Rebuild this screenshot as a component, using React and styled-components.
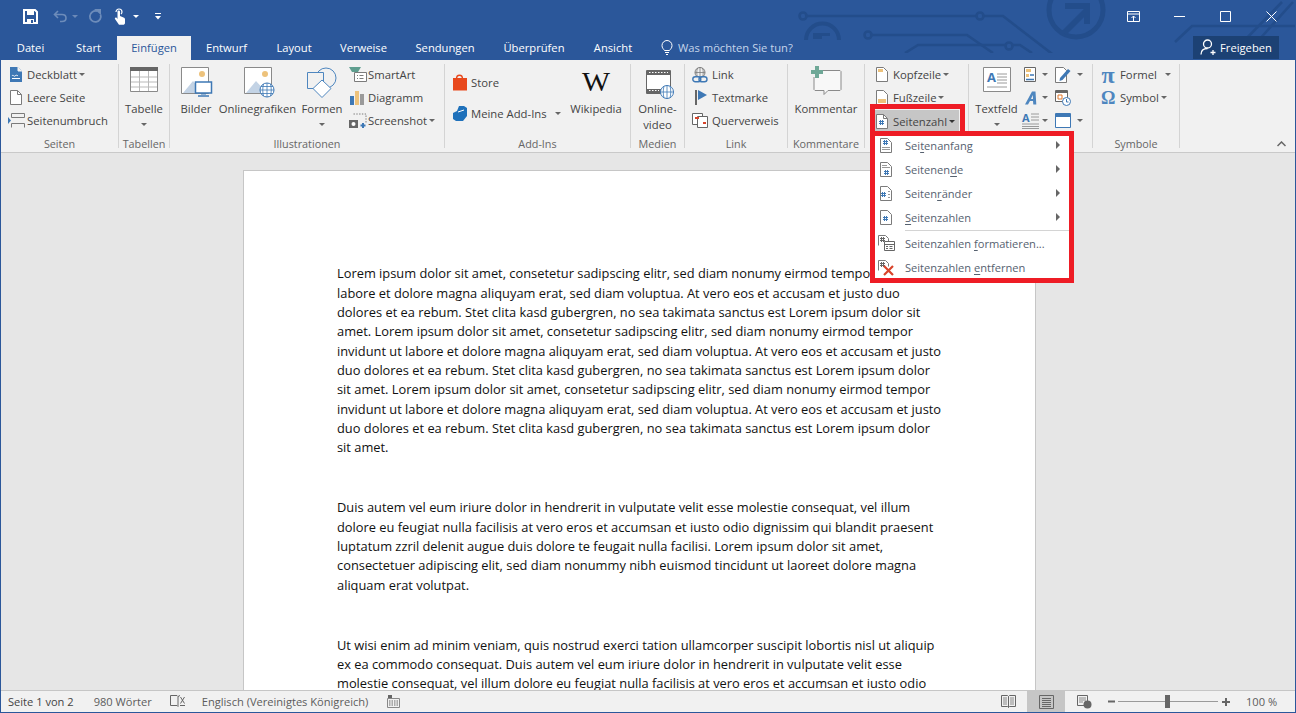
import React from 'react';
import styled, { createGlobalStyle } from 'styled-components';

const GlobalStyle = createGlobalStyle`
  html, body { margin: 0; padding: 0; overflow: hidden; background: #2b579a; }
  * { box-sizing: border-box; }
`;

const FONT = `"Open Sans", "Noto Sans", sans-serif`;
const BLUE = '#2b579a';
const RED = '#ee1c25';

const s = {
  Window: styled.div`
    position: relative;
    width: 1296px;
    height: 713px;
    display: flex;
    flex-direction: column;
    overflow: hidden;
    font-family: ${FONT};
    border: solid ${BLUE};
    border-width: 0 1px 1px 1px;
    background: ${BLUE};
  `,
  TitleBar: styled.div`
    height: 36px;
    flex: none;
    display: flex;
    align-items: center;
    padding: 0 0 4px 22px;
    justify-content: space-between;
  `,
  Quick: styled.div`
    display: flex;
    align-items: center;
  `,
  QuickItem: styled.div`
    margin-left: ${(p) => p.$ml || 0}px;
    opacity: ${(p) => p.$dim || 1};
  `,
  WinButtons: styled.div`
    display: flex;
    align-items: center;
    position: relative;
    z-index: 1;
    padding-right: 1px;
  `,
  WinButton: styled.div`
    width: 46px;
    display: flex;
    justify-content: center;
  `,
  Decor: styled.svg`
    position: absolute;
    left: -1px;
    top: 0;
  `,
  TabRow: styled.div`
    height: 24px;
    flex: none;
    display: flex;
    position: relative;
    font-size: 11.2px;
  `,
  Tab: styled.div`
    width: ${(p) => p.$w}px;
    display: flex;
    align-items: center;
    justify-content: center;
    padding-bottom: 2px;
    color: ${(p) => (p.$active ? BLUE : '#fff')};
    background: ${(p) => (p.$active ? '#f1f1f1' : 'transparent')};
  `,
  Search: styled.div`
    display: flex;
    align-items: center;
    gap: 5px;
    margin-left: 14px;
    padding-bottom: 2px;
    color: #c5d5ea;
  `,
  Share: styled.div`
    position: absolute;
    left: 1192px;
    top: 0;
    width: 86px;
    height: 23px;
    padding-bottom: 1px;
    background: #1c4174;
    color: #fff;
    display: flex;
    align-items: center;
    justify-content: center;
    gap: 4px;
  `,
  Ribbon: styled.div`
    height: 93px;
    flex: none;
    display: flex;
    position: relative;
    background: #f1f1f1;
    border-bottom: 1px solid #c9c9c9;
    font-size: 11.3px;
    color: #444;
    padding-top: 4px;
  `,
  Group: styled.div`
    width: ${(p) => p.$w}px;
    height: 84px;
    flex: none;
    display: flex;
    flex-direction: column;
    border-right: 1px solid #d4d4d4;
  `,
  GroupBody: styled.div`
    flex: 1;
    display: flex;
    padding-left: ${(p) => p.$pad || 0}px;
    min-height: 0;
  `,
  GroupLabel: styled.div`
    height: 12px;
    flex: none;
    text-align: center;
    font-size: 10.8px;
    line-height: 16px;
    color: #666;
    white-space: nowrap;
  `,
  Stack: styled.div`
    display: flex;
    flex-direction: column;
    width: ${(p) => (p.$w ? `${p.$w}px` : 'auto')};
    margin-top: -1px;
    padding-top: ${(p) => p.$pt || 0}px;
  `,
  Small: styled.div`
    height: ${(p) => p.$h || 23}px;
    width: ${(p) => (p.$w ? `${p.$w}px` : 'auto')};
    flex: none;
    display: flex;
    align-items: center;
    white-space: nowrap;
    padding-left: ${(p) => p.$pad || 0}px;
    gap: ${(p) => p.$gap ?? 5}px;
    background: ${(p) => (p.$on ? '#c6c6c6' : 'transparent')};
    margin-left: ${(p) => p.$ml || 0}px;
    margin-top: ${(p) => p.$mt || 0}px;
  `,
  Large: styled.div`
    width: ${(p) => p.$w}px;
    flex: none;
    display: flex;
    flex-direction: column;
    align-items: center;
    text-align: center;
    line-height: 16px;
    white-space: nowrap;
  `,
  LargeIcon: styled.div`
    height: 37px;
    padding-top: ${(p) => p.$top ?? 3}px;
    display: flex;
    justify-content: center;
    margin-left: ${(p) => p.$dx || 0}px;
  `,
  Caret: styled.span`
    display: inline-block;
    width: 0;
    height: 0;
    border: 3px solid transparent;
    border-top: 3px solid ${(p) => (p.$dark ? '#333' : '#666')};
    border-bottom: 0;
    margin-left: ${(p) => p.$ml ?? -3}px;
    margin-top: ${(p) => p.$mt || 0}px;
    flex: none;
  `,
  Glyph: styled.span`
    width: 14px;
    text-align: center;
    font-family: "Liberation Serif", serif;
    font-weight: 700;
    font-size: ${(p) => p.$size}px;
    line-height: 16px;
    color: #4e86bf;
  `,
  Collapse: styled.svg`
    position: absolute;
    right: 9px;
    bottom: 5px;
  `,
  DocArea: styled.div`
    flex: 1;
    min-height: 0;
    overflow: hidden;
    background: #e6e6e6;
    padding: 17px 0 0 242px;
  `,
  Page: styled.div`
    width: 793px;
    min-height: 600px;
    background: #fff;
    border: 1px solid #c6c6c6;
    border-bottom: 0;
    padding: 93.3px 0 0 93px;
    color: #111;
    font-size: 12.85px;
  `,
  Paragraph: styled.div`
    margin-bottom: 40.7px;
  `,
  Line: styled.div`
    height: 19.33px;
    line-height: 19.33px;
    white-space: nowrap;
  `,
  Status: styled.div`
    height: 22px;
    flex: none;
    display: flex;
    align-items: stretch;
    background: #f1f1f1;
    border-top: 1px solid #c6c6c6;
    font-size: 11.1px;
    color: #5c5c5c;
    position: relative;
  `,
  StatusItem: styled.div`
    display: flex;
    align-items: center;
    padding-bottom: 1px;
    margin-left: ${(p) => p.$ml || 0}px;
    white-space: nowrap;
    color: ${(p) => (p.$dark ? '#444' : 'inherit')};
  `,
  StatusRight: styled.div`
    margin-left: auto;
    display: flex;
    align-items: stretch;
  `,
  ViewButton: styled.div`
    width: 38px;
    display: flex;
    align-items: center;
    justify-content: center;
    background: ${(p) => (p.$on ? '#c6c6c6' : 'transparent')};
  `,
  Slider: styled.div`
    display: flex;
    align-items: center;
    margin-left: 5px;
  `,
  Track: styled.div`
    position: relative;
    width: 100px;
    height: 1px;
    background: #9a9a9a;
    margin: 0 4px 0 3px;
  `,
  Thumb: styled.div`
    position: absolute;
    left: 47px;
    top: -6px;
    width: 5px;
    height: 13px;
    background: #666;
  `,
  Zoom: styled.div`
    width: 65px;
    display: flex;
    align-items: center;
    padding: 0 0 1px 16px;
    white-space: nowrap;
  `,
  ButtonFrame: styled.div`
    position: absolute;
    left: 869px;
    top: 104px;
    width: 95px;
    height: 28px;
    border: 5px solid ${RED};
    border-bottom: 0;
    pointer-events: none;
  `,
  Menu: styled.div`
    position: absolute;
    left: 869px;
    top: 131px;
    width: 204px;
    height: 152px;
    border: 5px solid ${RED};
    background: #fff;
    overflow: hidden;
    font-size: 11.1px;
    color: #56616f;
  `,
  MenuList: styled.div`
    margin-top: -3px;
  `,
  MenuRow: styled.div`
    height: ${(p) => p.$h || 24}px;
    display: flex;
    align-items: center;
    position: relative;
    padding-left: 30px;
    white-space: nowrap;
  `,
  MenuIcon: styled.div`
    position: absolute;
    left: 2px;
    top: 0;
    bottom: 0;
    width: 18px;
    display: flex;
    align-items: center;
    justify-content: center;
  `,
  MenuArrow: styled.span`
    margin-left: auto;
    margin-right: 9px;
    width: 0;
    height: 0;
    border: 4px solid transparent;
    border-left: 4px solid #666;
    border-right: 0;
  `,
  MenuSep: styled.div`
    height: 1px;
    margin: 1px 0 0 30px;
    background: #d4d4d4;
  `,
  Key: styled.u`
    text-underline-offset: 2px;
  `,
  Icon: styled.svg`
    display: block;
    flex: none;
    overflow: visible;
  `,
  MiniCaret: styled.span`
    width: 0;
    height: 0;
    border: 3px solid transparent;
    border-top: 3px solid #fff;
    border-bottom: 0;
    display: block;
  `,
};

const Svg = ({ w = 16, h = 16, children }) => (
  <s.Icon width={w} height={h} viewBox={`0 0 ${w} ${h}`} fill="none">
    {children}
  </s.Icon>
);

const GR = '#7b7b7b';
const BL = '#3e78b5';
const OR = '#edc27b';
const LB = '#c3d3e5';

// title bar
const SaveIcon = () => (
  <Svg w={15} h={15}>
    <path d="M1 1h11l2 2v11H1z" stroke="#fff" strokeWidth="2" />
    <path d="M4 1h7v5H4zM4 14v-4h7v4" fill="#fff" />
    <path d="M8 11h2v3H8z" fill={BLUE} />
  </Svg>
);
const UndoIcon = () => (
  <Svg w={14} h={13}>
    <path d="M5 1L1.500 4.500 5 8M2 4.500h7c3 0 4 2 4 3.500s-1 3.500-4 3.500H7" stroke="#6d8cba" strokeWidth="1.600" />
  </Svg>
);
const RepeatIcon = () => (
  <Svg w={14} h={14}>
    <path d="M9 2.200a5.500 5.500 0 1 0 3.500 3.300" stroke="#6d8cba" strokeWidth="1.800" />
    <path d="M6 0h7v6z" fill="#6d8cba" />
  </Svg>
);
const TouchIcon = () => (
  <Svg w={12} h={17}>
    <path d="M2 4a3 3 0 0 1 6 0c0 1-.5 1.600-1 2" stroke="#fff" strokeWidth="1.200" />
    <path d="M3.500 3.600c0-1.600 2.500-1.600 2.500 0V8l3.500 1.400c1 .4 1.500 1 1.500 2V15c0 1-1 1.800-2 1.800H5L1 11c-.6-1 .6-2 1.600-1.200L3.500 11z" fill="#fff" />
  </Svg>
);
const CustomizeIcon = () => (
  <Svg w={6} h={7}>
    <path d="M0 .5h6" stroke="#fff" />
    <path d="M0 3h6L3 6.500z" fill="#fff" />
  </Svg>
);

const Decor = () => (
  <s.Decor width="1296" height="53" viewBox="0 0 1296 53" fill="none" stroke="#234d8b" strokeWidth="2.600">
    <circle cx="803" cy="16" r="3.500" />
    <path d="M807 16h169M984 16h19l57 44" />
    <circle cx="980" cy="16" r="3.500" />
    <circle cx="868" cy="35" r="3.500" />
    <path d="M872 35h95l26 18" />
    <circle cx="1009" cy="46" r="3.500" />
    <path d="M905 53l13-8h87M1013 45h7l12 8" />
    <path d="M806 40a16.500 16.500 0 0 1 33 0" strokeWidth="4" />
    <path d="M813 33h17v3h-8v3h-9z" fill="#234d8b" stroke="none" />
    <circle cx="1076" cy="10" r="27" strokeWidth="5" />
    <path d="M1064 33l22-22M1065 6h22v18" strokeWidth="6" />
    <path d="M1175 42l17-16h104M1243 42l39-40M1257 42l36-40" />
  </s.Decor>
);

const DisplayIcon = () => (
  <Svg w={13} h={11}>
    <path d="M.5.5h12v10H.5z" stroke="#fff" />
    <path d="M.5 3h12" stroke="#fff" />
    <path d="M6.500 10V5M4.500 7l2-2 2 2" stroke="#fff" />
  </Svg>
);
const MinIcon = () => (
  <Svg w={11} h={11}>
    <path d="M0 5.500h11" stroke="#fff" />
  </Svg>
);
const MaxIcon = () => (
  <Svg w={11} h={11}>
    <path d="M.5.5h10v10H.5z" stroke="#fff" />
  </Svg>
);
const CloseIcon = () => (
  <Svg w={11} h={11}>
    <path d="M.5.5l10 10M10.500.5l-10 10" stroke="#fff" />
  </Svg>
);
const BulbIcon = () => (
  <Svg w={12} h={15}>
    <path d="M3.500 10.500C2.500 9 1 8 1 5.500a5 5 0 0 1 10 0c0 2.500-1.500 3.500-2.500 5z" stroke="#fff" />
    <path d="M4 12.500h4M5 14.500h2" stroke="#fff" />
  </Svg>
);
const PersonIcon = () => (
  <Svg w={16} h={16}>
    <circle cx="7.500" cy="5" r="4" stroke="#fff" strokeWidth="1.300" />
    <path d="M1 15.500c0-4 2.500-6 6.500-6M10.500 13.500h5M13 11v5" stroke="#fff" strokeWidth="1.300" />
  </Svg>
);

// ribbon, small
const Doc = ({ children }) => (
  <Svg w={12} h={15}>
    <path d="M.5.5h7l4 4v10H.5z" fill="#fff" stroke={GR} />
    <path d="M7.500.5v4h4" stroke={GR} />
    {children}
  </Svg>
);
const CoverIcon = () => (
  <Svg w={12} h={15}>
    <path d="M0 0h8l4 4v11H0z" fill={BL} />
    <path d="M8 0v4h4" fill="#f1f1f1" stroke="#f1f1f1" />
    <path d="M2 9c1-2 2 1 3 0s2-1 3 0M2 11.500h8" stroke="#fff" />
  </Svg>
);
const BlankIcon = () => <Doc />;
const BreakIcon = () => (
  <Svg w={18} h={15}>
    <path d="M3.500 4.500V.5h13v4M3.500 4.500h13M3.500 10.500h13M3.500 14.500v-4M16.500 14.500v-4" stroke={GR} />
    <path d="M0 4l3 3.500L0 11z" fill={BL} />
  </Svg>
);
const SmartArtIcon = () => (
  <Svg w={18} h={15}>
    <path d="M0 0h12l-3 5H3z" fill="#5f9e8f" />
    <path d="M5.500 5.500h12v9h-12z" fill="#fff" stroke={GR} />
    <path d="M8 8.500h1M8 11.500h1M10.500 8.500h4M10.500 11.500h4" stroke={GR} />
  </Svg>
);
const ChartIcon = () => (
  <Svg w={14} h={14}>
    <path d="M0 5h4v9H0z" fill={BL} />
    <path d="M5 0h4v14H5z" fill={OR} />
    <path d="M10 3h4v11h-4z" fill="#9a9a9a" />
  </Svg>
);
const ScreenshotIcon = () => (
  <Svg w={18} h={15}>
    <path d="M4.500 1h12.500v9" stroke={GR} strokeDasharray="1.400 1.400" />
    <path d="M0 7h9v8H0z" fill="#666" />
    <circle cx="4.500" cy="11" r="2" fill="#fff" />
    <path d="M14 10v5M11.500 12.500h5" stroke={BL} strokeWidth="2" />
  </Svg>
);
const StoreIcon = () => (
  <Svg w={14} h={16}>
    <path d="M0 3h14v12.500H0z" fill="#e8481c" />
    <path d="M3.500 4c0-5 6-5 6 0" stroke="#e8481c" strokeWidth="1.400" />
  </Svg>
);
const AddInIcon = () => (
  <Svg w={14} h={15}>
    <path d="M6 0l5 0 3 2v8l-4 5H3l-3-2V7l4-2z" fill="#1f71bb" />
    <path d="M5 6l6-2" stroke="#fff" />
  </Svg>
);
const LinkIcon = () => (
  <Svg w={16} h={16}>
    <circle cx="8" cy="5.500" r="5" stroke={GR} />
    <path d="M3 5.500h10M8 .5v10M5.500 1c-1 3-1 6 0 9M10.500 1c1 3 1 6 0 9" stroke={GR} strokeWidth=".8" />
    <rect x=".8" y="9.800" width="8" height="5" rx="2.500" fill="#f1f1f1" stroke={BL} strokeWidth="1.400" />
    <rect x="7" y="9.800" width="8" height="5" rx="2.500" stroke={BL} strokeWidth="1.400" />
  </Svg>
);
const FlagIcon = () => (
  <Svg w={13} h={15}>
    <path d="M1 0v15" stroke="#666" strokeWidth="2" />
    <path d="M3 0l9 5-9 5z" fill={BL} />
  </Svg>
);
const XrefIcon = () => (
  <Svg w={16} h={15}>
    <path d="M.5.5h10v11H.5z" stroke="#666" fill="#fff" />
    <path d="M5.500 3.500h10v11h-10z" stroke="#666" fill="#fff" />
    <path d="M3 5h4M11 10h3" stroke="#d8432a" strokeWidth="2" />
  </Svg>
);
const HeaderIcon = () => (
  <Svg w={12} h={15}>
    <path d="M.5.5h7l4 4v10H.5z" fill="#fff" stroke={GR} />
    <path d="M2 2h5v3H2z" fill={OR} />
  </Svg>
);
const FooterIcon = () => (
  <Svg w={12} h={15}>
    <path d="M.5.5h7l4 4v10H.5z" fill="#fff" stroke={GR} />
    <path d="M2 9h8v4H2z" fill={OR} />
  </Svg>
);
const Hash = ({ x = 3, y = 6, c = BL }) => (
  <path
    d={`M${x + 1.5} ${y}v5M${x + 3.5} ${y}v5M${x} ${y + 1.5}h5M${x} ${y + 3.5}h5`}
    stroke={c}
  />
);
const PageNumIcon = () => (
  <Doc>
    <Hash x={3} y={6} />
  </Doc>
);
const QuickPartsIcon = () => (
  <Svg w={12} h={15}>
    <path d="M.5.5h11v14H.5z" stroke="#666" fill="#fff" />
    <path d="M2 2h5v3H2z" fill={OR} />
    <path d="M2 7h3v3H2z" fill={OR} />
    <path d="M6 8h4M2 12.500h8" stroke={BL} strokeWidth="1.400" />
  </Svg>
);
const WordArtIcon = () => (
  <Svg w={12} h={14}>
    <path d="M0 13.500L7 .5h3.500l.8 13H8.300L8 10H5l-2 3.500zM6 8h2l-.2-4z" fill="#4e86bf" />
  </Svg>
);
const DropCapIcon = () => (
  <Svg w={17} h={16}>
    <text x="0" y="9" fontSize="11" fontWeight="700" fontFamily="Open Sans" fill={BL}>A</text>
    <path d="M9 1h8M9 4h8M9 7h8M0 11h17M0 13.500h17M0 15.500h17" stroke="#9a9a9a" />
  </Svg>
);
const SignatureIcon = () => (
  <Svg w={16} h={16}>
    <path d="M.5.5h8l3 3v12H.5z" fill="#fff" stroke={GR} />
    <path d="M5 11l8-9 2.500 2-8 9-3 1z" fill={BL} />
  </Svg>
);
const DateIcon = () => (
  <Svg w={16} h={16}>
    <path d="M.5.5h12v11H.5z" fill="#fff" stroke="#666" />
    <path d="M1 1h11v2H1z" fill="#666" />
    <path d="M3 5h4v4H3z" stroke="#e0762b" />
    <circle cx="11.500" cy="11.500" r="4" fill="#fff" stroke={BL} />
    <path d="M11.500 9v3h2" stroke={BL} />
  </Svg>
);
const ObjectIcon = () => (
  <Svg w={16} h={15}>
    <path d="M.5.5h15v14H.5z" fill="#fff" stroke={BL} />
    <path d="M1 1h14v3H1z" fill={BL} />
  </Svg>
);

// ribbon, large
const TableIcon = () => (
  <Svg w={28} h={25}>
    <path d="M.5.5h27v24H.5z" fill="#fff" stroke="#8a8a8a" />
    <path d="M0 0h28v4H0z" fill="#666" />
    <path d="M1 10h26M1 15h26M1 20h26M9.500 4v20M18.500 4v20" stroke="#b9b9b9" />
  </Svg>
);
const Picture = ({ children }) => (
  <Svg w={31} h={31}>
    <path d="M.5.5h27v26H.5z" fill="#fff" stroke="#8a8a8a" />
    <circle cx="21" cy="7" r="3" fill={OR} />
    <path d="M2 26l10-12 11 12z" fill={LB} />
    {children}
  </Svg>
);
const PictureIcon = () => (
  <Picture>
    <path d="M14.500 15h16v11h-16z" fill="#fff" stroke={BL} strokeWidth="1.500" />
    <path d="M17 29h11" stroke={BL} strokeWidth="1.500" />
    <path d="M20 27h5" stroke={BL} />
  </Picture>
);
const OnlinePictureIcon = () => (
  <Picture>
    <circle cx="23" cy="23" r="7" fill="#fff" stroke={BL} />
    <path d="M16 23h14M23 16v14M19.500 17c-1 4-1 8 0 12M26.500 17c1 4 1 8 0 12M17 19.500h12M17 26.500h12" stroke={BL} strokeWidth=".8" />
  </Picture>
);
const ShapesIcon = () => (
  <Svg w={30} h={31}>
    <circle cx="19" cy="11" r="10" fill="#f1f1f1" stroke="#4e86bf" />
    <path d="M.5 5.500h16v16H.5z" fill="#f1f1f1" stroke="#4e86bf" />
    <path d="M15 13l9 8.500-9 9-9-9z" fill="#fff" stroke="#4e86bf" />
  </Svg>
);
const WikiIcon = () => (
  <Svg w={30} h={22}>
    <text x="1" y="21" fontFamily="Liberation Serif" fontSize="27" textLength="28" lengthAdjust="spacingAndGlyphs" fill="#111">W</text>
  </Svg>
);
const VideoIcon = () => (
  <Svg w={28} h={29}>
    <path d="M.5.5h24v23H.5z" fill="#fff" stroke="#666" />
    <path d="M1 1h23v4H1zM1 19h23v4H1z" fill="#666" />
    <path d="M3 2.500h19M3 20.500h10" stroke="#fff" strokeDasharray="1.500 1.500" />
    <circle cx="21" cy="22" r="6.500" fill="#fff" stroke={BL} />
    <path d="M14.500 22h13M21 15.500v13M18 16c-1 4-1 8 0 12M24 16c1 4 1 8 0 12" stroke={BL} strokeWidth=".8" />
  </Svg>
);
const CommentIcon = () => (
  <Svg w={31} h={29}>
    <path d="M6 4.500h23l1 1v18l-1 1H17l-4 4v-4H4l-1-1V11" fill="#f8f8f8" stroke="#8a8a8a" />
    <path d="M4 0h4v4h4v4H8v4H4V8H0V4h4z" fill="#6fa897" />
  </Svg>
);
const TextBoxIcon = () => (
  <Svg w={28} h={25}>
    <path d="M.5.5h27v24H.5z" fill="#fff" stroke="#8a8a8a" />
    <text x="4" y="15" fontSize="13" fontWeight="700" fontFamily="Open Sans" fill={BL}>A</text>
    <path d="M14 7h10M14 10h10M14 13h10M14 16h10M4 20h20" stroke="#9a9a9a" />
  </Svg>
);

// menu
const MenuDoc = ({ children }) => (
  <Svg w={12} h={15}>
    <path d="M.5.5h7l4 4v10H.5z" fill="#fff" stroke={GR} />
    {children}
  </Svg>
);
const TopIcon = () => (
  <MenuDoc>
    <Hash x={3} y={2} />
    <path d="M2 9.500h8M2 11.500h8" stroke="#999" />
  </MenuDoc>
);
const BottomIcon = () => (
  <MenuDoc>
    <path d="M2 3.500h5M2 5.500h8" stroke="#999" />
    <Hash x={4} y={8} />
  </MenuDoc>
);
const MarginIcon = () => (
  <MenuDoc>
    <Hash x={1} y={6} />
    <path d="M8 5.500h2M8 8.500h2M8 11.500h2" stroke="#999" />
  </MenuDoc>
);
const PlainIcon = () => (
  <MenuDoc>
    <Hash x={3} y={6} />
  </MenuDoc>
);
const FormatIcon = () => (
  <Svg w={17} h={16}>
    <path d="M.5.5h7l3 3v3M.5.5v10" stroke={GR} />
    <Hash x={2} y={2} c="#666" />
    <path d="M6.500 6.500h10v9h-10z" fill="#fff" stroke="#666" />
    <path d="M6.500 9.500h10" stroke="#666" />
    <path d="M8 11h2v1H8zM8 13h2v1H8zM11.500 11h3v1h-3zM11.500 13h3v1h-3z" fill="#666" />
  </Svg>
);
const RemoveIcon = () => (
  <Svg w={17} h={16}>
    <path d="M.5.500h7l3 3v3M.5.500v10" stroke={GR} />
    <Hash x={2} y={2} c="#666" />
    <path d="M6 6l9 9M15 6l-9 9" stroke="#d8432a" strokeWidth="2.200" />
  </Svg>
);

const tabs = [
  ['Datei', 59],
  ['Start', 57],
  ['Einfügen', 74, true],
  ['Entwurf', 71],
  ['Layout', 64],
  ['Verweise', 75],
  ['Sendungen', 88],
  ['Überprüfen', 90],
  ['Ansicht', 68],
];

const doc = [
  [
    'Lorem ipsum dolor sit amet, consetetur sadipscing elitr, sed diam nonumy eirmod tempor invidunt ut',
    'labore et dolore magna aliquyam erat, sed diam voluptua. At vero eos et accusam et justo duo',
    'dolores et ea rebum. Stet clita kasd gubergren, no sea takimata sanctus est Lorem ipsum dolor sit',
    'amet. Lorem ipsum dolor sit amet, consetetur sadipscing elitr, sed diam nonumy eirmod tempor',
    'invidunt ut labore et dolore magna aliquyam erat, sed diam voluptua. At vero eos et accusam et justo',
    'duo dolores et ea rebum. Stet clita kasd gubergren, no sea takimata sanctus est Lorem ipsum dolor',
    'sit amet. Lorem ipsum dolor sit amet, consetetur sadipscing elitr, sed diam nonumy eirmod tempor',
    'invidunt ut labore et dolore magna aliquyam erat, sed diam voluptua. At vero eos et accusam et justo',
    'duo dolores et ea rebum. Stet clita kasd gubergren, no sea takimata sanctus est Lorem ipsum dolor',
    'sit amet.',
  ],
  [
    'Duis autem vel eum iriure dolor in hendrerit in vulputate velit esse molestie consequat, vel illum',
    'dolore eu feugiat nulla facilisis at vero eros et accumsan et iusto odio dignissim qui blandit praesent',
    'luptatum zzril delenit augue duis dolore te feugait nulla facilisi. Lorem ipsum dolor sit amet,',
    'consectetuer adipiscing elit, sed diam nonummy nibh euismod tincidunt ut laoreet dolore magna',
    'aliquam erat volutpat.',
  ],
  [
    'Ut wisi enim ad minim veniam, quis nostrud exerci tation ullamcorper suscipit lobortis nisl ut aliquip',
    'ex ea commodo consequat. Duis autem vel eum iriure dolor in hendrerit in vulputate velit esse',
    'molestie consequat, vel illum dolore eu feugiat nulla facilisis at vero eros et accumsan et iusto odio',
  ],
];

const App = () => (
  <s.Window>
    <GlobalStyle />
    <Decor />
    <s.TitleBar>
      <s.Quick>
        <SaveIcon />
        <s.QuickItem $ml={15}><UndoIcon /></s.QuickItem>
        <s.QuickItem $ml={5} $dim={0.3}><s.MiniCaret /></s.QuickItem>
        <s.QuickItem $ml={10}><RepeatIcon /></s.QuickItem>
        <s.QuickItem $ml={12}><TouchIcon /></s.QuickItem>
        <s.QuickItem $ml={7}><s.MiniCaret /></s.QuickItem>
        <s.QuickItem $ml={16}><CustomizeIcon /></s.QuickItem>
      </s.Quick>
      <s.WinButtons>
        <s.WinButton><DisplayIcon /></s.WinButton>
        <s.WinButton><MinIcon /></s.WinButton>
        <s.WinButton><MaxIcon /></s.WinButton>
        <s.WinButton><CloseIcon /></s.WinButton>
      </s.WinButtons>
    </s.TitleBar>

    <s.TabRow>
      {tabs.map(([name, w, active]) => (
        <s.Tab key={name} $w={w} $active={active}>{name}</s.Tab>
      ))}
      <s.Search>
        <BulbIcon />
        Was möchten Sie tun?
      </s.Search>
      <s.Share>
        <PersonIcon />
        Freigeben
      </s.Share>
    </s.TabRow>

    <s.Ribbon>
      <s.Group $w={118}>
        <s.GroupBody $pad={9}>
          <s.Stack>
            <s.Small><CoverIcon />Deckblatt<s.Caret /></s.Small>
            <s.Small $gap={5}><BlankIcon />Leere Seite</s.Small>
            <s.Small $gap={1} $ml={-2}><BreakIcon />Seitenumbruch</s.Small>
          </s.Stack>
        </s.GroupBody>
        <s.GroupLabel>Seiten</s.GroupLabel>
      </s.Group>
      <s.Group $w={51}>
        <s.GroupBody>
          <s.Large $w={50}>
            <s.LargeIcon><TableIcon /></s.LargeIcon>
            Tabelle
            <s.Caret $ml={0} $mt={6} />
          </s.Large>
        </s.GroupBody>
        <s.GroupLabel>Tabellen</s.GroupLabel>
      </s.Group>
      <s.Group $w={275}>
        <s.GroupBody $pad={2}>
          <s.Large $w={48}>
            <s.LargeIcon><PictureIcon /></s.LargeIcon>
            Bilder
          </s.Large>
          <s.Large $w={75}>
            <s.LargeIcon $dx={4}><OnlinePictureIcon /></s.LargeIcon>
            Onlinegrafiken
          </s.Large>
          <s.Large $w={54}>
            <s.LargeIcon><ShapesIcon /></s.LargeIcon>
            Formen
            <s.Caret $ml={0} $mt={6} />
          </s.Large>
          <s.Stack>
            <s.Small $gap={1}><SmartArtIcon />SmartArt</s.Small>
            <s.Small $gap={4} $ml={1}><ChartIcon />Diagramm</s.Small>
            <s.Small $gap={1}><ScreenshotIcon />Screenshot<s.Caret $ml={1} /></s.Small>
          </s.Stack>
        </s.GroupBody>
        <s.GroupLabel>Illustrationen</s.GroupLabel>
      </s.Group>
      <s.Group $w={186}>
        <s.GroupBody $pad={8}>
          <s.Stack $w={115} $pt={4}>
            <s.Small $h={31} $gap={4}><StoreIcon />Store</s.Small>
            <s.Small $h={31} $gap={4}><AddInIcon />Meine Add-Ins<s.Caret $ml={4} /></s.Small>
          </s.Stack>
          <s.Large $w={56}>
            <s.LargeIcon $top={6}><WikiIcon /></s.LargeIcon>
            Wikipedia
          </s.Large>
        </s.GroupBody>
        <s.GroupLabel>Add-Ins</s.GroupLabel>
      </s.Group>
      <s.Group $w={54}>
        <s.GroupBody>
          <s.Large $w={53}>
            <s.LargeIcon $dx={4} $top={6}><VideoIcon /></s.LargeIcon>
            Online-<br />video
          </s.Large>
        </s.GroupBody>
        <s.GroupLabel>Medien</s.GroupLabel>
      </s.Group>
      <s.Group $w={103}>
        <s.GroupBody $pad={7}>
          <s.Stack>
            <s.Small $gap={4}><LinkIcon />Link</s.Small>
            <s.Small $gap={4} $ml={3}><FlagIcon />Textmarke</s.Small>
            <s.Small $gap={4}><XrefIcon />Querverweis</s.Small>
          </s.Stack>
        </s.GroupBody>
        <s.GroupLabel>Link</s.GroupLabel>
      </s.Group>
      <s.Group $w={77}>
        <s.GroupBody>
          <s.Large $w={76}>
            <s.LargeIcon $top={2}><CommentIcon /></s.LargeIcon>
            Kommentar
          </s.Large>
        </s.GroupBody>
        <s.GroupLabel>Kommentare</s.GroupLabel>
      </s.Group>
      <s.Group $w={104}>
        <s.GroupBody $pad={9}>
          <s.Stack>
            <s.Small $pad={2} $gap={5}><HeaderIcon />Kopfzeile<s.Caret /></s.Small>
            <s.Small $pad={2} $gap={5}><FooterIcon />Fußzeile<s.Caret /></s.Small>
            <s.Small $pad={2} $gap={5} $on $w={85} $h={22} $mt={1}><PageNumIcon />Seitenzahl<s.Caret $dark /></s.Small>
          </s.Stack>
        </s.GroupBody>
        <s.GroupLabel />
      </s.Group>
      <s.Group $w={124}>
        <s.GroupBody>
          <s.Large $w={55}>
            <s.LargeIcon><TextBoxIcon /></s.LargeIcon>
            Textfeld
            <s.Caret $ml={0} $mt={6} />
          </s.Large>
          <s.Stack $w={31}>
            <s.Small $gap={6}><QuickPartsIcon /><s.Caret $ml={0} /></s.Small>
            <s.Small $gap={5} $ml={1}><WordArtIcon /><s.Caret $ml={0} /></s.Small>
            <s.Small $gap={3} $ml={-2}><DropCapIcon /><s.Caret $ml={0} /></s.Small>
          </s.Stack>
          <s.Stack>
            <s.Small $gap={6}><SignatureIcon /><s.Caret $ml={0} /></s.Small>
            <s.Small><DateIcon /></s.Small>
            <s.Small $gap={6}><ObjectIcon /><s.Caret $ml={0} /></s.Small>
          </s.Stack>
        </s.GroupBody>
        <s.GroupLabel />
      </s.Group>
      <s.Group $w={87}>
        <s.GroupBody $pad={8}>
          <s.Stack>
            <s.Small $gap={5}><s.Glyph $size={24}>π</s.Glyph>Formel<s.Caret $ml={3} /></s.Small>
            <s.Small $gap={5}><s.Glyph $size={18}>Ω</s.Glyph>Symbol<s.Caret /></s.Small>
          </s.Stack>
        </s.GroupBody>
        <s.GroupLabel>Symbole</s.GroupLabel>
      </s.Group>
      <s.Collapse width="9" height="6" viewBox="0 0 9 6" fill="none">
        <path d="M.5 5l4-4 4 4" stroke="#666" strokeWidth="1.500" />
      </s.Collapse>
    </s.Ribbon>

    <s.DocArea>
      <s.Page>
        {doc.map((lines, i) => (
          <s.Paragraph key={i}>
            {lines.map((line) => (
              <s.Line key={line}>{line}</s.Line>
            ))}
          </s.Paragraph>
        ))}
      </s.Page>
    </s.DocArea>

    <s.Status>
      <s.StatusItem $ml={7} $dark>Seite 1 von 2</s.StatusItem>
      <s.StatusItem $ml={20}>980 Wörter</s.StatusItem>
      <s.StatusItem $ml={18}>
        <Svg w={15} h={14}>
          <path d="M7 1.500H.5v10H7l1 1V2.500zM8 2.500l2-1" stroke="#666" />
          <path d="M10.500 3l4 6.500M14.500 3l-4 6.500" stroke="#666" />
          <path d="M10 11.500h5" stroke="#666" />
        </Svg>
      </s.StatusItem>
      <s.StatusItem $ml={17}>Englisch (Vereinigtes Königreich)</s.StatusItem>
      <s.StatusItem $ml={19}>
        <Svg w={13} h={14}>
          <path d="M1 1h4v3H1z" fill="#666" />
          <path d="M.5 4.500h12v9H.5z" stroke="#888" />
          <path d="M2 7h9M2 9h9M2 11h9" stroke="#666" strokeDasharray="1.500 1" />
        </Svg>
      </s.StatusItem>
      <s.StatusRight>
        <s.ViewButton>
          <Svg w={15} h={15}>
            <path d="M.5 1.500h6l1 1 1-1h6v11h-6l-1 1-1-1h-6zM7.500 2.500v11" stroke="#666" />
            <path d="M2 4h4M2 6h4M2 8h4M2 10h4M9 4h4M9 6h4M9 8h4M9 10h4" stroke="#888" />
          </Svg>
        </s.ViewButton>
        <s.ViewButton $on>
          <Svg w={15} h={14}>
            <path d="M.5.500h14v13H.5z" stroke="#666" />
            <path d="M3 3.500h9M3 5.500h9M3 7.500h9M3 9.500h9M3 11.500h9" stroke="#666" />
          </Svg>
        </s.ViewButton>
        <s.ViewButton>
          <Svg w={15} h={14}>
            <path d="M.5.500h10v10H.5z" stroke="#666" />
            <path d="M2 3h7M2 5h7M2 7h4" stroke="#888" />
            <circle cx="10.500" cy="9.500" r="4" fill="#666" />
          </Svg>
        </s.ViewButton>
        <s.Slider>
          <Svg w={7} h={3}><path d="M0 1.500h7" stroke="#666" strokeWidth="2" /></Svg>
          <s.Track><s.Thumb /></s.Track>
          <Svg w={8} h={8}><path d="M0 4h8M4 0v8" stroke="#666" strokeWidth="2" /></Svg>
        </s.Slider>
        <s.Zoom>100 %</s.Zoom>
      </s.StatusRight>
    </s.Status>

    <s.ButtonFrame />
    <s.Menu>
      <s.MenuList>
        <s.MenuRow>
          <s.MenuIcon><TopIcon /></s.MenuIcon>
          <span>Sei<s.Key>t</s.Key>enanfang</span>
          <s.MenuArrow />
        </s.MenuRow>
        <s.MenuRow>
          <s.MenuIcon><BottomIcon /></s.MenuIcon>
          <span>Seitenen<s.Key>d</s.Key>e</span>
          <s.MenuArrow />
        </s.MenuRow>
        <s.MenuRow>
          <s.MenuIcon><MarginIcon /></s.MenuIcon>
          <span>Seiten<s.Key>r</s.Key>änder</span>
          <s.MenuArrow />
        </s.MenuRow>
        <s.MenuRow>
          <s.MenuIcon><PlainIcon /></s.MenuIcon>
          <span><s.Key>S</s.Key>eitenzahlen</span>
          <s.MenuArrow />
        </s.MenuRow>
        <s.MenuSep />
        <s.MenuRow>
          <s.MenuIcon><FormatIcon /></s.MenuIcon>
          <span>Seitenzahlen <s.Key>f</s.Key>ormatieren...</span>
        </s.MenuRow>
        <s.MenuRow $h={25}>
          <s.MenuIcon><RemoveIcon /></s.MenuIcon>
          <span>Seitenzahlen <s.Key>e</s.Key>ntfernen</span>
        </s.MenuRow>
      </s.MenuList>
    </s.Menu>
  </s.Window>
);

export default App;
